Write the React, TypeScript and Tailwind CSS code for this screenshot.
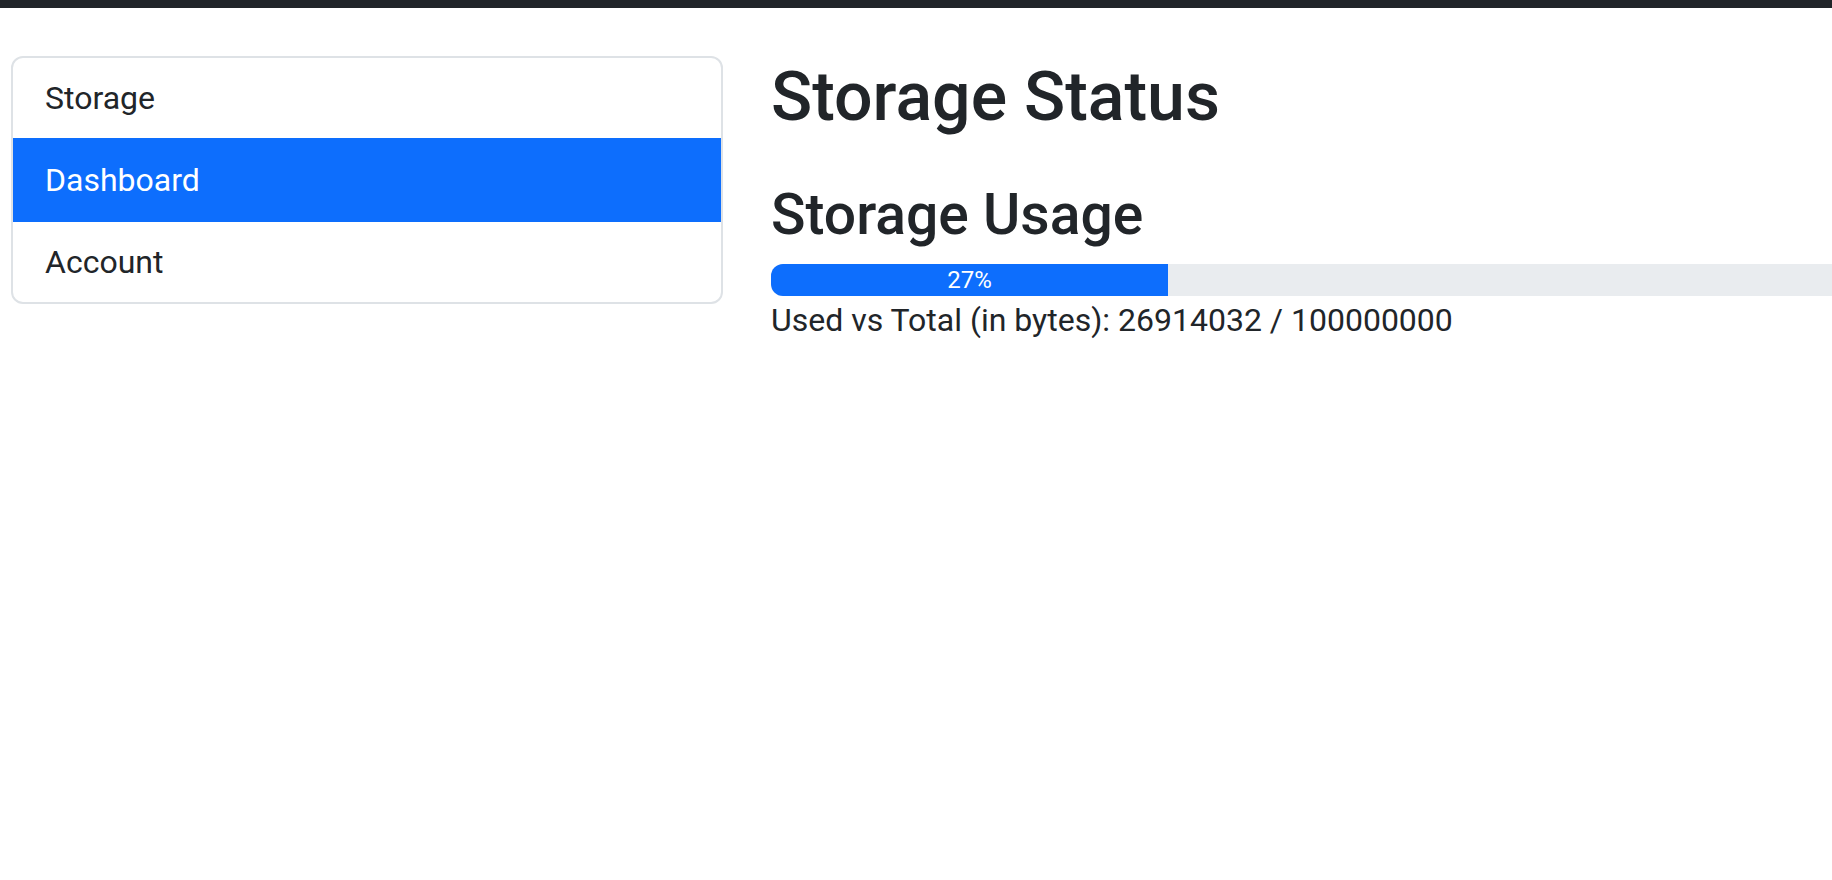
const used = 26914032;
const total = 100000000;

export default function App() {
  const pct = Math.round((used / total) * 100);
  return (
    <div className="min-h-screen overflow-hidden bg-white text-[#212529]" style={{ fontFamily: 'Roboto, "Noto Sans", sans-serif' }}>
      <div className="h-[8px] bg-[#212529]" />
      <div className="flex items-start gap-[48px] pt-[48px] pl-[11px]">
        <div className="w-[712px] shrink-0 overflow-hidden rounded-[12px] border-2 border-[#dee2e6] text-[32px] leading-[48px]">
          <div className="px-[32px] py-[16px]">Storage</div>
          <div className="-mx-[2px] bg-[#0d6efd] px-[34px] py-[18px] text-white">Dashboard</div>
          <div className="px-[32px] py-[16px]">Account</div>
        </div>
        <div className="w-[1472px] shrink-0">
          <h1 className="text-[68px] font-medium leading-[82px]">Storage Status</h1>
          <h2 className="mt-[42px] mb-[14px] text-[57px] font-medium leading-[70px]">Storage Usage</h2>
          <div className="flex h-[32px] overflow-hidden rounded-[12px] bg-[#e9ecef]">
            <div className="flex w-[397px] items-center justify-center bg-[#0d6efd] text-[24px] text-white">{pct}%</div>
          </div>
          <p className="text-[32px] leading-[48px]">Used vs Total (in bytes): {used} / {total}</p>
        </div>
      </div>
    </div>
  );
}
